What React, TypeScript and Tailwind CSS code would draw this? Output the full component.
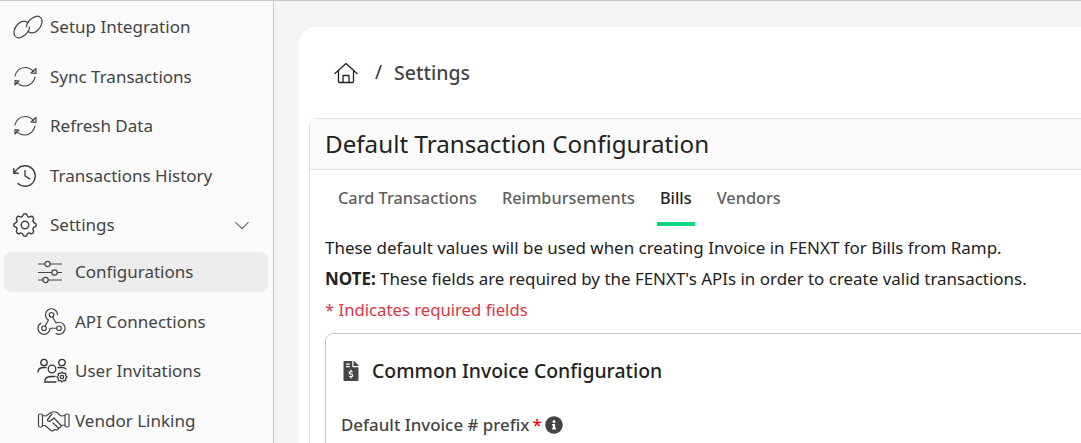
import type { ReactNode } from "react";
import { FaFileInvoiceDollar, FaInfoCircle } from "react-icons/fa";
import { PiCaretDownLight, PiClockCounterClockwiseLight } from "react-icons/pi";
import { TbSettings } from "react-icons/tb";

const GEAR =
  "M10.325 4.317c.426-1.756 2.924-1.756 3.35 0a1.724 1.724 0 0 0 2.573 1.066c1.543-.94 3.31.826 2.37 2.37a1.724 1.724 0 0 0 1.065 2.572c1.756.426 1.756 2.924 0 3.35a1.724 1.724 0 0 0-1.066 2.573c.94 1.543-.826 3.31-2.37 2.37a1.724 1.724 0 0 0-2.572 1.065c-.426 1.756-2.924 1.756-3.35 0a1.724 1.724 0 0 0-2.573-1.066c-1.543.94-3.31-.826-2.37-2.37a1.724 1.724 0 0 0-1.065-2.572c-1.756-.426-1.756-2.924 0-3.35a1.724 1.724 0 0 0 1.066-2.573c-.94-1.543.826-3.31 2.37-2.37c1 .608 2.296.07 2.572-1.065";

function LinkIcon() {
  return (
    <svg width="32" height="24" viewBox="0 0 32 24" fill="none" stroke="#444" strokeWidth="1.2" strokeLinecap="round">
      <path d="M16 7.500C13 5.500 9 6 6 9c-4 4-5 9-3 12 2 2.500 6 2 10-1 3-2.500 4.500-5.500 4.500-8" />
      <path d="M16 16.500c3 2 7 1.500 10-1.500 4-4 5-9 3-12-2-2.500-6-2-10 1-3 2.500-4.500 5.500-4.500 8" />
    </svg>
  );
}

function SyncIcon() {
  return (
    <svg className="ml-px" width="24" height="22" viewBox="0 0 24 22" fill="none" stroke="#444" strokeWidth="1.2" strokeLinejoin="round" strokeLinecap="round">
      <path d="M2 10C3 5 7 1.500 12 1.500c4 0 7 2 9 4.500" />
      <path d="M18 7l5 .5V2.500z" />
      <path d="M22 11c-1 5-5 9-10 9-4 0-7-2-8.500-4" />
      <path d="M6 15l-4-.5V19z" />
    </svg>
  );
}

function SlidersIcon() {
  return (
    <svg width="26" height="24" viewBox="0 0 26 24" fill="none" stroke="#444" strokeWidth="1.2">
      <path d="M1 4h7M13 4h12M1 12.500h14M20 12.500h5M1 20h5M11 20h14" />
      <circle cx="10.500" cy="4" r="2.700" />
      <circle cx="17.500" cy="12.500" r="2.700" />
      <circle cx="8.500" cy="20" r="2.700" />
    </svg>
  );
}

function WebhookIcon() {
  return (
    <svg width="29" height="27" viewBox="2.500 3.500 19 18" fill="none" stroke="#444" strokeWidth=".8" strokeLinecap="round" strokeLinejoin="round">
      <path d="M4.876 13.610a4 4 0 1 0 6.124 3.390h6" />
      <path d="M15.066 20.502a4 4 0 1 0 1.934-7.502c-.706 0-1.424.179-2 .5l-3-5.500" />
      <path d="M16 8a4 4 0 1 0-8 0c0 1.506.77 2.818 2 3.500l-3 5.500" />
      <circle cx="12" cy="8" r="1.500" fill="#fafafa" />
      <circle cx="7" cy="17" r="1.500" fill="#fafafa" />
      <circle cx="17" cy="17" r="1.500" fill="#fafafa" />
    </svg>
  );
}

function UsersGearIcon() {
  return (
    <svg width="32" height="27" viewBox="0 0 32 27" fill="none" stroke="#333" strokeWidth="1.3" strokeLinecap="round">
      <circle cx="7" cy="4.500" r="3.200" />
      <circle cx="25" cy="4.500" r="3.200" />
      <circle cx="15" cy="11" r="3.800" />
      <path d="M1 14c0-3 2.500-4.500 6-4.500h2" />
      <path d="M21 9.500h4c1.500 0 3 .5 4 1.500" />
      <path d="M8 24v-1.500c0-3 3-4 7-4h3" />
      <path d="M8 24h11" />
      <g transform="translate(18.400 12.400) scale(.55)" strokeWidth="2.200">
        <path d={GEAR} />
        <circle cx="12" cy="12" r="3" />
      </g>
    </svg>
  );
}

function HandshakeIcon() {
  return (
    <svg width="33" height="22" viewBox="0 0 33 22" fill="none" stroke="#444" strokeWidth="1.2" strokeLinecap="round" strokeLinejoin="round">
      <rect x="1.500" y="4" width="4" height="13" rx="1.500" />
      <rect x="28" y="4" width="4" height="13" rx="1.500" />
      <path d="M5.500 5.500 9 6l5-3.500c2-1 4-1 6 0L24 6l4-.5" />
      <path d="M5.500 15.500 8 15.500l6 5c1.500 1 3 0 3.500-1l1.500.5c1.500 0 2.500-1 2.500-2 1.500 0 3-1 2.500-2.500L28 15" />
      <path d="M24 15.500 17 8l-3.500 3c-1.500 1-3.500 0-3-1.500L15 4" />
      <path d="M21.500 18 16 13" />
    </svg>
  );
}

function HomeIcon() {
  return (
    <svg width="24" height="22" viewBox="0 0 24 22" fill="none" stroke="#222" strokeWidth="1.3" strokeLinecap="round" strokeLinejoin="round">
      <path d="M1 11.500 12 1.500l11 10" />
      <path d="M4.500 9v10.500c0 .6.4 1 1 1h13c.6 0 1-.4 1-1V9" />
      <path d="M9 20.500V13.500h6v7" />
    </svg>
  );
}

function NavItem({ icon, label, sub, active, trailing }: { icon: ReactNode; label: string; sub?: boolean; active?: boolean; trailing?: ReactNode }) {
  return (
    <div
      className={`flex h-10 items-center rounded-lg ${sub ? "pl-[33px]" : "pl-[8px]"} ${active ? "bg-[#ececec]" : ""}`}
    >
      <span className="flex w-[38px] shrink-0 items-center">{icon}</span>
      <span className="text-[17px] leading-6 text-[#444]">{label}</span>
      {trailing}
    </div>
  );
}

function Sidebar() {
  return (
    <aside className="flex w-[274px] shrink-0 flex-col gap-[9.5px] border-r border-[#c9c9c9] bg-[#fafafa] pt-[6px] pr-[5px] pl-[4px]">
      <NavItem icon={<LinkIcon />} label="Setup Integration" />
      <NavItem icon={<SyncIcon />} label="Sync Transactions" />
      <NavItem icon={<SyncIcon />} label="Refresh Data" />
      <NavItem icon={<PiClockCounterClockwiseLight className="-ml-[2px] text-[30px] text-[#444]" />} label="Transactions History" />
      <NavItem
        icon={<TbSettings className="-ml-[2px] text-[30px] text-[#444]" strokeWidth={1.2} />}
        label="Settings"
        trailing={<PiCaretDownLight className="mr-[16px] ml-auto text-[20px] text-[#444]" />}
      />
      <div className="-mt-[2.5px]">
        <NavItem sub active icon={<SlidersIcon />} label="Configurations" />
      </div>
      <NavItem sub icon={<WebhookIcon />} label="API Connections" />
      <NavItem sub icon={<UsersGearIcon />} label="User Invitations" />
      <NavItem sub icon={<HandshakeIcon />} label="Vendor Linking" />
    </aside>
  );
}

function Tabs() {
  const tabs = ["Card Transactions", "Reimbursements", "Bills", "Vendors"];
  return (
    <div className="flex gap-[19px] pl-[25px]">
      {tabs.map((t) => (
        <div key={t} className="flex flex-col items-center">
          <div className={`px-[3px] pt-[16px] pb-[12px] text-[16.300px] leading-6 font-medium ${t === "Bills" ? "text-[#222]" : "text-[#5f5f5f]"}`}>{t}</div>
          <div className={`h-1 w-full ${t === "Bills" ? "bg-[#0fd67e]" : ""}`} />
        </div>
      ))}
    </div>
  );
}

export default function App() {
  return (
    <div className="flex h-screen overflow-hidden border-t border-[#c9c9c9] bg-[#f4f4f4] font-['Noto_Sans',sans-serif]">
      <Sidebar />
      <main className="min-w-0 flex-1 pt-[26px] pl-[25px]">
        <div className="h-[500px] w-[900px] rounded-tl-2xl bg-white pl-[10px]">
          <div className="flex h-[91px] items-center gap-[12px] pl-[25px]">
            <HomeIcon />
            <span className="ml-[5px] text-[19px] text-[#333]">/</span>
            <span className="text-[19.500px] font-medium text-[#444]">Settings</span>
          </div>
          <section className="h-[400px] w-[900px] rounded-tl-lg border border-[#e2e2e6]">
            <div className="flex h-[51px] items-center border-b border-[#e2e2e6] bg-[#fafafa] pl-[15px] text-[24.200px] text-[#222]">
              Default Transaction Configuration
            </div>
            <Tabs />
            <div className="px-[15px] pt-[6px] text-[16.950px] leading-[31px] text-[#222]">
              <p>These default values will be used when creating Invoice in FENXT for Bills from Ramp.</p>
              <p><b className="font-bold">NOTE:</b> These fields are required by the FENXT's APIs in order to create valid transactions.</p>
              <p className="text-[16.700px] text-[#dc3545]">* Indicates required fields</p>
            </div>
            <div className="mt-[8px] ml-[15px] h-[200px] rounded-tl-lg border border-[#c9c9c9] pt-[22px] pl-[15px]">
              <div className="flex items-center gap-[11px]">
                <FaFileInvoiceDollar className="text-[20px] text-[#444]" />
                <span className="text-[19.400px] font-medium text-[#222]">Common Invoice Configuration</span>
              </div>
              <div className="mt-[27px] flex items-center gap-[3px] text-[16.900px] font-medium text-[#444]">
                <span>Default Invoice # prefix</span>
                <span className="font-medium text-[#f00]">*</span>
                <FaInfoCircle className="text-[18px] text-[#444]" />
              </div>
            </div>
          </section>
        </div>
      </main>
    </div>
  );
}
